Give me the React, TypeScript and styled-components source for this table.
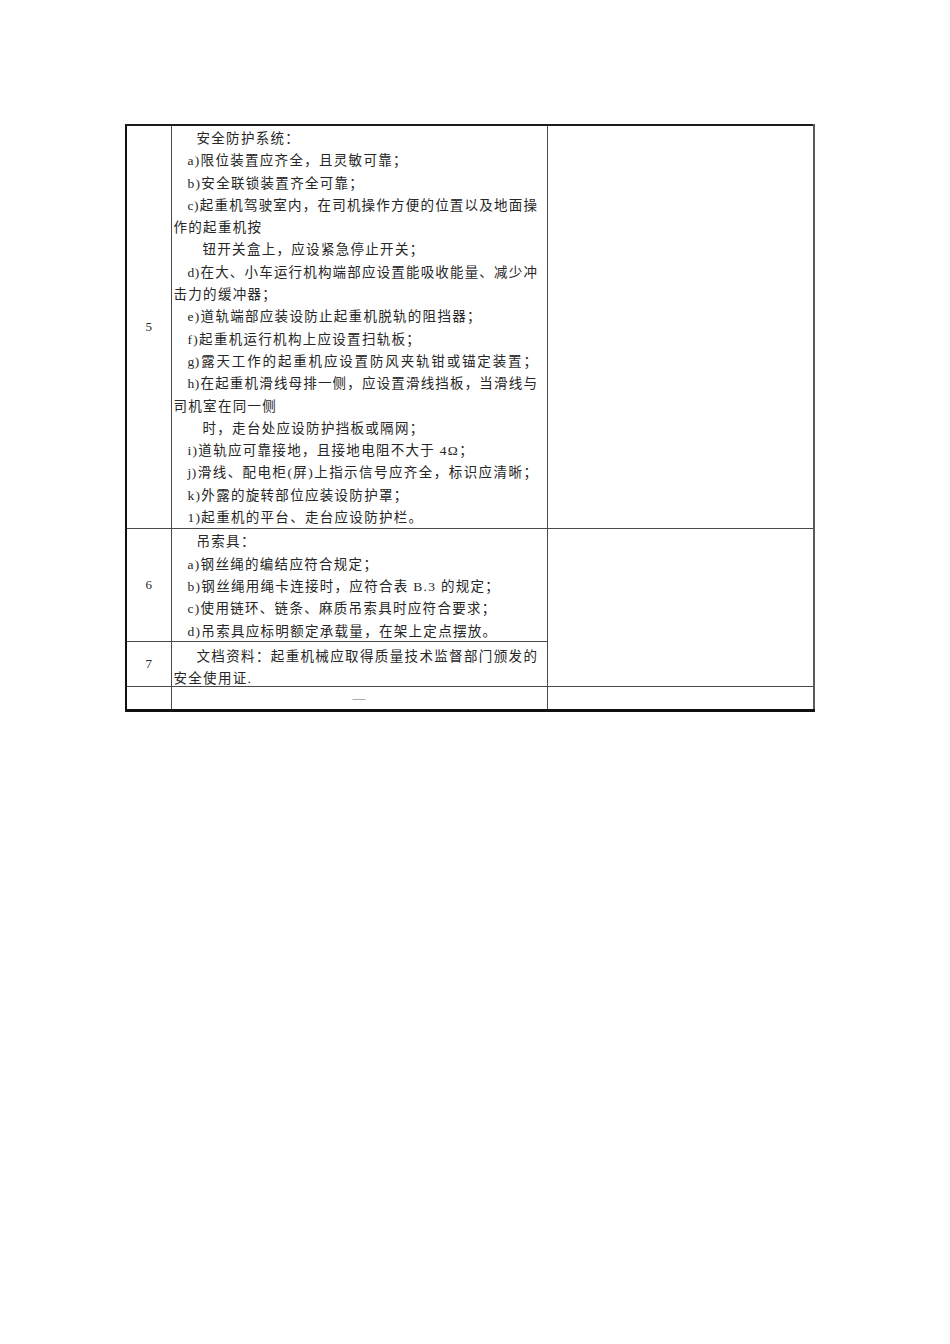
import styled, { createGlobalStyle } from 'styled-components';

const GlobalStyle = createGlobalStyle`
  html, body {
    margin: 0;
    padding: 0;
    background: #fff;
  }
`;

const Page = styled.div`
  width: 950px;
  min-height: 1344px;
  padding: 124px 0 0 125px;
  box-sizing: border-box;
  font-family: "Liberation Serif", "Noto Sans CJK SC", serif;
  color: #262626;
`;

const Table = styled.table`
  border-collapse: collapse;
  table-layout: fixed;
  width: 690px;
  border-top: 2px solid #1c1c1c;
  border-left: 2px solid #111;
  border-right: 2px solid #5a5a5a;
  border-bottom: 3px solid #111;
`;

const Cell = styled.td<{ $height?: number }>`
  border: 1px solid #4a4a4a;
  padding: 0;
  vertical-align: middle;
  height: ${(p) => (p.$height ? `${p.$height}px` : 'auto')};
`;

const NumberCell = styled(Cell)`
  text-align: center;
  font-size: 13px;
`;

const TextCell = styled(Cell)`
  padding: 0 9px 0 2px;
  vertical-align: top;
`;

// shifts the glyphs down a little without making the row taller
const Body = styled.div<{ $shift: number; $trim: number }>`
  padding-top: ${(p) => p.$shift}px;
  margin-bottom: -${(p) => p.$trim}px;
`;

const Line = styled.div<{ $indent?: number; $full?: boolean }>`
  font-size: 13.5px;
  line-height: 22.3px;
  letter-spacing: ${(p) => (p.$full ? 0.6 : 1.3)}px;
  white-space: ${(p) => (p.$full ? 'normal' : 'nowrap')};
  padding-left: ${(p) => p.$indent ?? 0}px;
  text-align: ${(p) => (p.$full ? 'justify' : 'left')};
  text-align-last: ${(p) => (p.$full ? 'justify' : 'auto')};
`;

const Dash = styled.div`
  text-align: center;
  color: #6e6e6e;
  font-size: 13px;
  line-height: 22px;
`;

type LineData = { text: string; indent?: number; full?: boolean };

const H = 23;
const I = 14;
const C = 29;

const row5: LineData[] = [
  { text: '安全防护系统：', indent: H },
  { text: 'a)限位装置应齐全，且灵敏可靠；', indent: I },
  { text: 'b)安全联锁装置齐全可靠；', indent: I },
  { text: 'c)起重机驾驶室内，在司机操作方便的位置以及地面操', indent: I, full: true },
  { text: '作的起重机按' },
  { text: '钮开关盒上，应设紧急停止开关；', indent: C },
  { text: 'd)在大、小车运行机构端部应设置能吸收能量、减少冲', indent: I, full: true },
  { text: '击力的缓冲器；' },
  { text: 'e)道轨端部应装设防止起重机脱轨的阻挡器；', indent: I },
  { text: 'f)起重机运行机构上应设置扫轨板；', indent: I },
  { text: 'g)露天工作的起重机应设置防风夹轨钳或锚定装置；', indent: I, full: true },
  { text: 'h)在起重机滑线母排一侧，应设置滑线挡板，当滑线与', indent: I, full: true },
  { text: '司机室在同一侧' },
  { text: '时，走台处应设防护挡板或隔网；', indent: C },
  { text: 'i)道轨应可靠接地，且接地电阻不大于 4Ω；', indent: I },
  { text: 'j)滑线、配电柜(屏)上指示信号应齐全，标识应清晰；', indent: I, full: true },
  { text: 'k)外露的旋转部位应装设防护罩；', indent: I },
  { text: '1)起重机的平台、走台应设防护栏。', indent: I },
];

const row6: LineData[] = [
  { text: '吊索具：', indent: H },
  { text: 'a)钢丝绳的编结应符合规定；', indent: I },
  { text: 'b)钢丝绳用绳卡连接时，应符合表 B.3 的规定；', indent: I },
  { text: 'c)使用链环、链条、麻质吊索具时应符合要求；', indent: I },
  { text: 'd)吊索具应标明额定承载量，在架上定点摆放。', indent: I },
];

const row7: LineData[] = [
  { text: '文档资料：起重机械应取得质量技术监督部门颁发的', indent: H, full: true },
  { text: '安全使用证.' },
];

const Lines = ({ lines, shift, trim }: { lines: LineData[]; shift: number; trim: number }) => (
  <Body $shift={shift} $trim={trim}>
    {lines.map((l, i) => (
      <Line key={i} $indent={l.indent} $full={l.full}>
        {l.text}
      </Line>
    ))}
  </Body>
);

export default function App() {
  return (
    <Page>
      <GlobalStyle />
      <Table>
        <colgroup>
          <col style={{ width: 45 }} />
          <col style={{ width: 376 }} />
          <col />
        </colgroup>
        <tbody>
          <tr>
            <NumberCell>5</NumberCell>
            <TextCell>
              <Lines lines={row5} shift={2} trim={1} />
            </TextCell>
            <Cell />
          </tr>
          <tr>
            <NumberCell>6</NumberCell>
            <TextCell>
              <Lines lines={row6} shift={2} trim={2} />
            </TextCell>
            <Cell rowSpan={2} />
          </tr>
          <tr>
            <NumberCell>7</NumberCell>
            <TextCell>
              <Lines lines={row7} shift={4} trim={4} />
            </TextCell>
          </tr>
          <tr>
            <Cell $height={22} />
            <Cell $height={22}>
              <Dash>—</Dash>
            </Cell>
            <Cell $height={22} />
          </tr>
        </tbody>
      </Table>
    </Page>
  );
}
